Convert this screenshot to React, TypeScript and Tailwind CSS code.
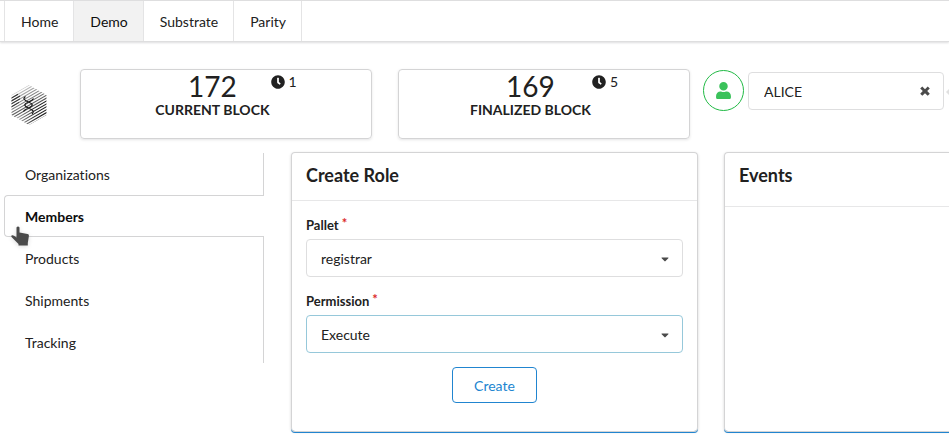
import { useState } from "react";
import type { ReactNode } from "react";
import { FaCaretDown, FaClock, FaUser } from "react-icons/fa";

const navItems = ["Home", "Demo", "Substrate", "Parity"];
const tabs = ["Organizations", "Members", "Products", "Shipments", "Tracking"];
const stripes = Array.from({ length: 19 }, (_, i) => i);

function Logo() {
  return (
    <svg viewBox="0 0 36 40" className="h-10 w-9" role="img" aria-label="Substrate">
      <defs>
        <clipPath id="hex">
          <path d="M18 0 L35.500 10 V30 L18 40 L0.500 30 V10 Z" />
        </clipPath>
        <linearGradient id="fadeTop" x1="4" y1="4" x2="16" y2="24" gradientUnits="userSpaceOnUse">
          <stop offset="0" stopColor="#dedede" />
          <stop offset="0.5" stopColor="#8c8c8c" />
          <stop offset="1" stopColor="#555" />
        </linearGradient>
        <linearGradient id="fadeLow" x1="2" y1="32" x2="26" y2="28" gradientUnits="userSpaceOnUse">
          <stop offset="0" stopColor="#b8b8b8" />
          <stop offset="1" stopColor="#1c1c1c" />
        </linearGradient>
      </defs>
      <g clipPath="url(#hex)" strokeWidth="1.05">
        {stripes.map((i) => (
          <path
            key={i}
            d={`M0 ${10.4 + i * 2.9} L36 ${-10.4 + i * 2.9}`}
            stroke={i < 9 ? "url(#fadeTop)" : "url(#fadeLow)"}
          />
        ))}
        <path d="M0 13.300 L7 9.260 M0 16.200 L9 11 M0 19.100 L9 13.900 M0 22 L8 17.380" stroke="#333" />
      </g>
      <path
        d="M14.500 11.500 C11.500 13.500 13 15 17.500 17 C22.500 19.200 22.500 20.800 17.500 23 C15 24 13 25 12.500 26.500 M22.500 13.500 C21.500 15.500 19.500 16.100 17.500 17 C12.500 19.200 12.500 20.800 17.500 23 C22.500 25.300 23.500 26.500 21 29"
        fill="none"
        stroke="#1b1b1b"
        strokeWidth="1.2"
      />
    </svg>
  );
}

function BlockCard({ value, label, seconds }: { value: number; label: string; seconds: number }) {
  return (
    <section className="flex h-[70px] flex-1 justify-center gap-px rounded border border-[#d4d4d5] pt-0.5 shadow-[0_1px_3px_0_#e4e4e5]">
      <div className="text-center">
        <div className="text-[28px] leading-7">{value}</div>
        <div className="font-bold leading-5">{label}</div>
      </div>
      <div className="flex h-5 items-center gap-1">
        <FaClock className="size-3.5" aria-hidden="true" />
        <span>{seconds}</span>
      </div>
    </section>
  );
}

function SelectField({
  id,
  label,
  options,
  className,
}: {
  id: string;
  label: string;
  options: string[];
  className: string;
}) {
  return (
    <div>
      <label htmlFor={id} className="flex h-[22px] items-start gap-[3px] text-[13px] leading-4 font-bold">
        {label}
        <span className="leading-3 text-[#db2828]">*</span>
      </label>
      <div className="relative">
        <select
          id={id}
          className={`h-[38px] w-full appearance-none rounded border bg-white px-3.5 pt-0.5 outline-none ${className}`}
        >
          {options.map((option) => (
            <option key={option}>{option}</option>
          ))}
        </select>
        <FaCaretDown
          className="pointer-events-none absolute top-[14px] right-3 size-3 text-[#4a4a4a]"
          aria-hidden="true"
        />
      </div>
    </div>
  );
}

function Card({
  title,
  className,
  headerClassName,
  children,
}: {
  title: string;
  className: string;
  headerClassName: string;
  children?: ReactNode;
}) {
  return (
    <section
      className={`border border-b-0 border-[#d4d4d5] shadow-[0_1px_0_0_#d4d4d5,0_2px_0_0_#2185d0,0_1px_3px_0_#d4d4d5] ${className}`}
    >
      <h2 className={`border-b border-[#e7e7e8] px-3.5 pt-[11px] text-lg leading-[23px] font-bold ${headerClassName}`}>
        {title}
      </h2>
      {children}
    </section>
  );
}

export default function App() {
  const [account, setAccount] = useState("ALICE");
  const [active, setActive] = useState("Members");

  return (
    <div className="min-h-screen overflow-hidden bg-white font-['Lato',sans-serif] text-sm text-[#212121] [font-variant-ligatures:none]">
      <nav className="flex h-[42px] border-y border-[#dededf] pl-1 shadow-[0_1px_2px_0_#dededf]">
        {navItems.map((item, index) => (
          <a
            key={item}
            href="#"
            aria-current={item === "Demo" ? "page" : undefined}
            className={`flex items-center border-r border-[#e4e4e5] pt-0.5 pr-[15px] pl-4 leading-none ${
              index === 0 ? "border-l" : ""
            } ${item === "Demo" ? "bg-[#f2f2f2] text-[#0d0d0d]" : ""}`}
          >
            {item}
          </a>
        ))}
      </nav>

      <header className="flex items-start pt-[27px] pl-[11px]">
        <div className="w-[69px] shrink-0 pt-4">
          <Logo />
        </div>
        <div className="flex flex-1 gap-[26px]">
          <BlockCard value={172} label="CURRENT BLOCK" seconds={1} />
          <BlockCard value={169} label="FINALIZED BLOCK" seconds={5} />
        </div>
        <div className="ml-[13px] flex items-center gap-1 pt-px">
          <button
            type="button"
            aria-label="Account"
            className="flex size-[41px] items-center justify-center rounded-full border border-[#21ba45] text-[#3bc25b]"
          >
            <FaUser className="size-[17px]" />
          </button>
          <div className="flex h-[38px] w-[196px] items-center rounded border border-[#dededf] px-3">
            <input
              aria-label="Account name"
              value={account}
              onChange={(event) => setAccount(event.target.value)}
              className="min-w-0 flex-1 pt-0.5 pl-[3px] outline-none"
            />
            <button type="button" aria-label="Clear" onClick={() => setAccount("")} className="text-[#4a4a4a]">
              <svg viewBox="0 0 12 12" className="size-3" aria-hidden="true">
                <path
                  d="M3.300 1.500 L6 4.200 L8.700 1.500 L10.800 3.600 L8.200 6.100 L10.800 8.700 L8.700 10.800 L6 8.200 L3.300 10.800 L1.200 8.700 L3.800 6.100 L1.200 3.600 Z"
                  fill="currentColor"
                />
              </svg>
            </button>
          </div>
        </div>
        <svg viewBox="0 0 3 6" className="mt-5 ml-0.5 h-1.5 w-[3px]" aria-hidden="true">
          <path d="M3 0 V6 L0 3 Z" fill="#e0e0e0" />
        </svg>
      </header>

      <main className="flex items-start pt-[13px] pl-1">
        <nav aria-label="Sections" className="relative mt-px flex w-[260px] shrink-0 flex-col">
          {tabs.map((tab) => (
            <button
              key={tab}
              type="button"
              onClick={() => setActive(tab)}
              className={`h-[42px] pt-0.5 pl-5 text-left ${
                tab === active
                  ? "rounded-l border border-r-0 border-[#d4d4d5] font-bold text-[#0d0d0d]"
                  : "border-r border-l border-r-[#d4d4d5] border-l-transparent"
              }`}
            >
              {tab}
            </button>
          ))}
          <svg
            viewBox="0 0 18 20"
            className="absolute top-[73px] left-[7px] h-5 w-[18px] drop-shadow-sm"
            aria-hidden="true"
          >
            <path
              d="M7 0.500 C8.300 0.500 8.500 1.300 8.500 2 V6.500 L16.500 8 C17.500 8.200 18 8.800 17.900 10 L16.800 17 V19.500 H7.500 V18 L1 11.500 C0.300 10.700 0 10 0.600 9.500 C1.300 8.900 2.300 9.300 3 9.800 L5.500 11.500 V2 C5.500 1.300 5.800 0.500 7 0.500 Z"
              fill="#4a4a4a"
            />
          </svg>
        </nav>

        <div className="ml-[27px] grid flex-1 grid-cols-[407fr_225fr] gap-x-[26px]">
          <Card title="Create Role" className="rounded" headerClassName="pb-[13px]">
            <form className="px-3.5 pt-4 pb-7" onSubmit={(event) => event.preventDefault()}>
              <div className="flex flex-col gap-4">
                <SelectField id="pallet" label="Pallet" options={["registrar"]} className="border-[#dededf]" />
                <SelectField id="permission" label="Permission" options={["Execute"]} className="border-[#96c8da]" />
              </div>
              <div className="pt-3.5 text-center">
                <button
                  type="submit"
                  className="h-9 rounded border border-[#2185d0] px-[21px] pt-0.5 text-[#2185d0]"
                >
                  Create
                </button>
              </div>
            </form>
          </Card>
          <Card title="Events" className="rounded-l border-r-0" headerClassName="pb-[19px]" />
        </div>
      </main>
    </div>
  );
}
